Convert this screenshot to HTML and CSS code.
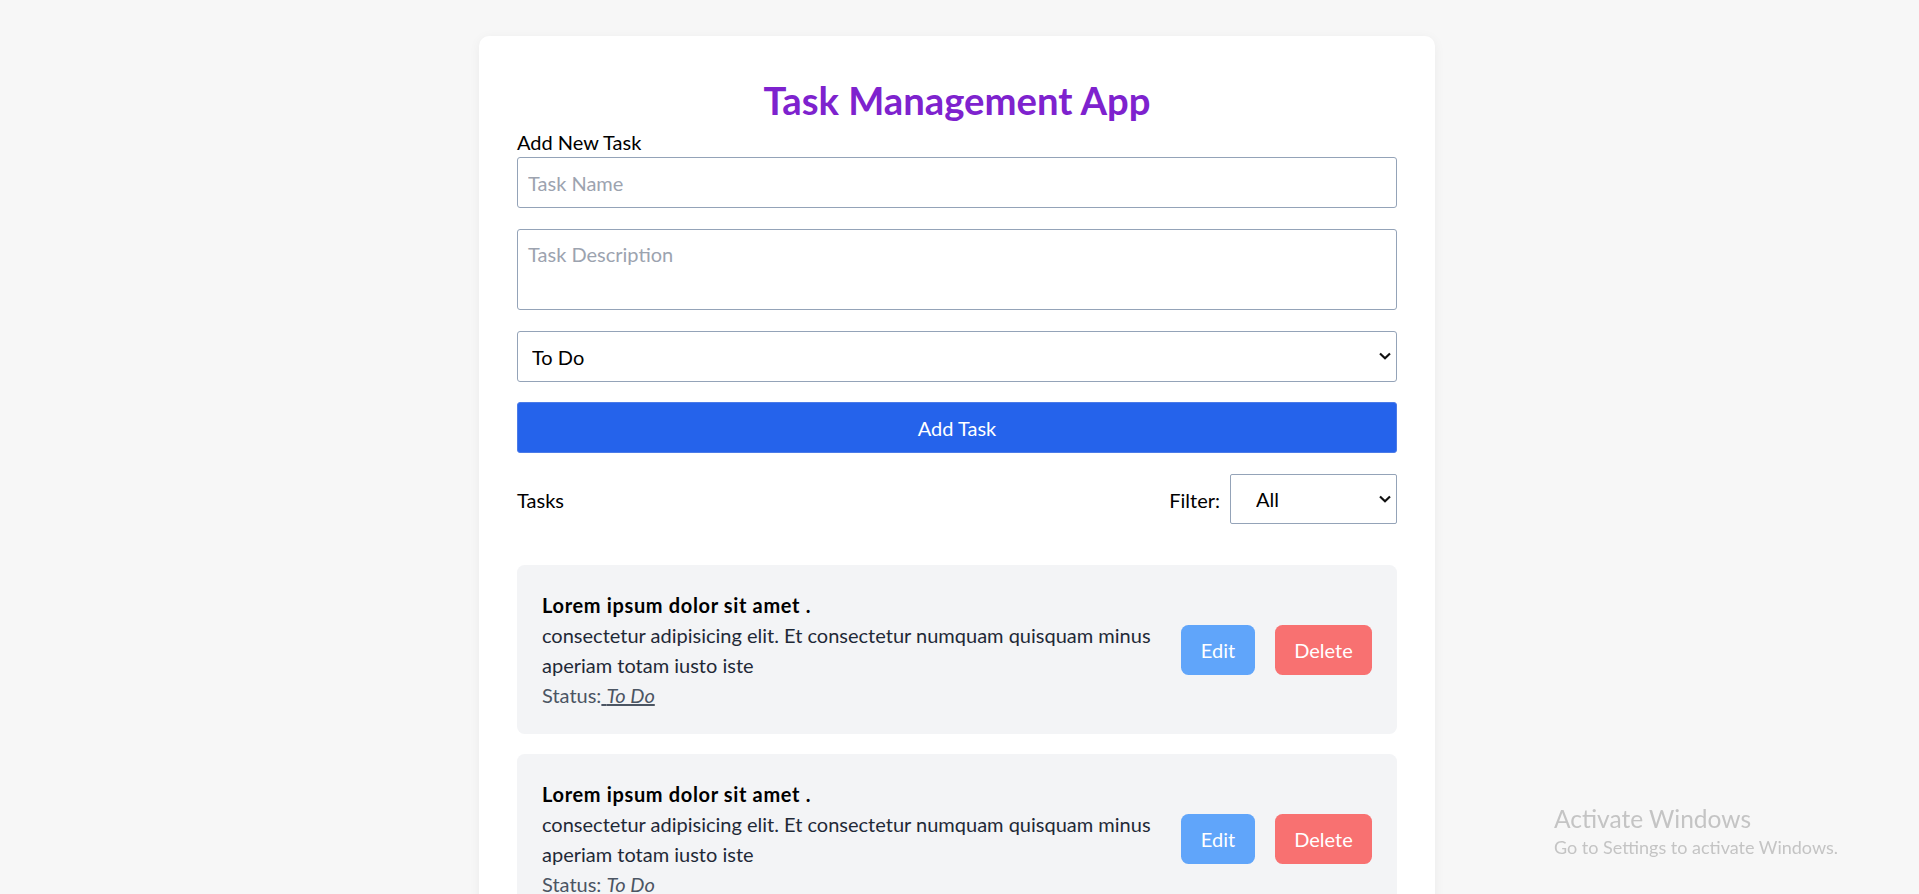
FILE: index.html
```html
<!DOCTYPE html>
<html lang="en">
<head>
<meta charset="utf-8">
<title>Task Management App</title>
<link rel="stylesheet" href="styles.css">
</head>
<body>
<main class="card">
  <h1 class="title">Task Management App</h1>
  <form class="form">
    <label class="label" for="name">Add New Task</label>
    <input class="field input" id="name" type="text" placeholder="Task Name">
    <textarea class="field textarea" placeholder="Task Description"></textarea>
    <div class="select-wrap">
      <select class="field select">
        <option>To Do</option>
        <option>In Progress</option>
        <option>Done</option>
      </select>
      <svg class="chevron" width="12" height="8" viewBox="0 0 12 8"><polyline points="1,1.5 6,6.2 11,1.5" fill="none" stroke="#111" stroke-width="2.2"/></svg>
    </div>
    <button class="add-btn" type="button">Add Task</button>
  </form>

  <div class="tasks-head">
    <span class="tasks-title">Tasks</span>
    <div class="filter">
      <span class="filter-label">Filter:</span>
      <div class="select-wrap filter-wrap">
        <select class="field filter-select">
          <option>All</option>
          <option>To Do</option>
          <option>In Progress</option>
          <option>Done</option>
        </select>
        <svg class="chevron" width="12" height="8" viewBox="0 0 12 8"><polyline points="1,1.5 6,6.2 11,1.5" fill="none" stroke="#111" stroke-width="2.2"/></svg>
      </div>
    </div>
  </div>

  <ul class="task-list">
    <li class="task">
      <div class="task-body">
        <div class="task-name">Lorem ipsum dolor sit amet .</div>
        <div class="task-desc">consectetur adipisicing elit. Et consectetur numquam quisquam minus aperiam totam iusto iste</div>
        <div class="task-status">Status:<span class="underlined"> <em>To Do</em></span></div>
      </div>
      <div class="task-actions">
        <button class="btn btn-edit" type="button">Edit</button>
        <button class="btn btn-delete" type="button">Delete</button>
      </div>
    </li>
    <li class="task">
      <div class="task-body">
        <div class="task-name">Lorem ipsum dolor sit amet .</div>
        <div class="task-desc">consectetur adipisicing elit. Et consectetur numquam quisquam minus aperiam totam iusto iste</div>
        <div class="task-status">Status: <em>To Do</em></div>
      </div>
      <div class="task-actions">
        <button class="btn btn-edit" type="button">Edit</button>
        <button class="btn btn-delete" type="button">Delete</button>
      </div>
    </li>
  </ul>
</main>

<div class="activate">
  <div class="activate-title">Activate Windows</div>
  <div class="activate-sub">Go to Settings to activate Windows.</div>
</div>
</body>
</html>
```
FILE: styles.css
```css
* { box-sizing: border-box; }

html, body {
  margin: 0;
  background: #f7f7f7;
}

body {
  padding: 0 5px 0 0;
  font-family: "Lato", "Liberation Sans", sans-serif;
  font-size: 20px;
  line-height: 30px;
  color: #000;
}

.card {
  width: 956px;
  margin: 36px auto 0;
  background: #fff;
  border-radius: 10px;
  box-shadow: 0 2px 12px rgba(0, 0, 0, 0.05);
  padding: 42px 38px 40px;
}

.title {
  margin: 0 0 4px;
  text-align: center;
  font-size: 38.25px;
  line-height: 45px;
  font-weight: 700;
  color: #7e22ce;
}

.form {
  display: flex;
  flex-direction: column;
}

.label {
  display: block;
  font-size: 20px;
  line-height: 30px;
}

.field {
  display: block;
  width: 100%;
  font-family: inherit;
  font-size: 20px;
  line-height: 30px;
  color: #000;
  background: #fff;
  border: 1px solid #94a3b8;
  border-radius: 3px;
  outline: none;
}

.field::placeholder {
  color: #9ca3af;
}

.input {
  height: 51px;
  padding: 0 10px;
  margin-bottom: 21px;
}

.textarea {
  height: 81px;
  padding: 9px 10px;
  resize: none;
  margin-bottom: 21px;
}

.select-wrap {
  position: relative;
}

.select {
  -webkit-appearance: none;
  appearance: none;
  height: 51px;
  padding: 0 30px 0 14px;
  margin-bottom: 20px;
}

.chevron {
  position: absolute;
  right: 6px;
  top: 21px;
  pointer-events: none;
}

.add-btn {
  display: block;
  width: 100%;
  height: 51px;
  font-family: inherit;
  font-size: 20px;
  color: #fff;
  background: #2563eb;
  border: 1px solid #4b7be8;
  border-radius: 3px;
}

.tasks-head {
  display: flex;
  align-items: center;
  justify-content: space-between;
  margin-top: 21px;
  margin-bottom: 41px;
  height: 50px;
}

.tasks-title {
  font-size: 20px;
  padding-top: 2px;
}

.filter {
  display: flex;
  align-items: center;
  gap: 10px;
}

.filter-label {
  padding-top: 2px;
}

.filter-wrap .chevron {
  top: 21px;
}

.filter-select {
  -webkit-appearance: none;
  appearance: none;
  width: 167px;
  height: 50px;
  padding: 0 30px 0 25px;
  border-radius: 2px;
}

.task-list {
  list-style: none;
  margin: 0;
  padding: 0;
  display: flex;
  flex-direction: column;
  gap: 20px;
}

.task {
  display: flex;
  align-items: center;
  gap: 20px;
  background: #f3f4f6;
  border-radius: 7.5px;
  padding: 25px 20px 24px 25px;
}

.task-body {
  flex: 1;
  min-width: 0;
}

.task-name {
  font-weight: 700;
  letter-spacing: 0.65px;
  color: #000;
}

.task-desc {
  color: #1f2937;
}

.task-status {
  color: #4b5563;
}

.task-status em {
  font-style: italic;
}

.underlined {
  text-decoration: underline;
  text-decoration-color: #4b5563;
}

.task-actions {
  display: flex;
  gap: 20px;
  margin-right: 5px;
}

.btn {
  height: 50px;
  padding: 0 19px;
  font-family: inherit;
  font-size: 20px;
  color: #fff;
  border: none;
  border-radius: 7.5px;
}

.btn-edit {
  width: 74px;
  background: #60a5fa;
}

.btn-delete {
  width: 97px;
  background: #f87171;
}

.activate {
  position: fixed;
  left: 1554px;
  top: 804px;
  color: #c4c4c4;
  pointer-events: none;
}

.activate-title {
  font-size: 24.5px;
  line-height: 30px;
}

.activate-sub {
  font-size: 18px;
  line-height: 26px;
}
```
